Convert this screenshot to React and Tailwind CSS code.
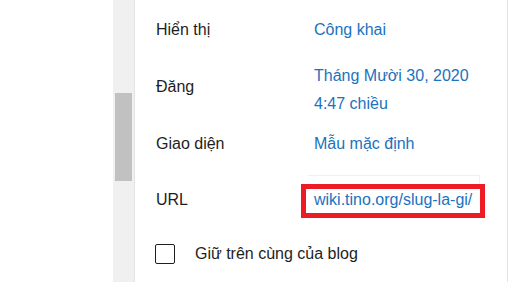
export default function App() {
  return (
    <div
      className="flex h-[282px] w-[511px] overflow-hidden bg-white text-[16px] text-[#1e1e1e]"
      style={{ fontFamily: '"Liberation Sans", Arial, sans-serif' }}
    >
      <div className="w-[113px] shrink-0" />

      {/* scrollbar */}
      <div className="flex w-[22px] shrink-0 flex-col border-r border-[#e4e4e4] bg-[#f0f0f0]">
        <div className="h-[93px]" />
        <div className="mx-[2px] h-[88px] bg-[#c1c1c1]" />
      </div>

      {/* settings panel */}
      <div className="w-[373px] shrink-0 border-r border-[#e2e4e7] pl-[21px] pt-[16px] leading-[28px]">
        <div className="flex">
          <div className="w-[158px]">Hiển thị</div>
          <div className="text-[#1b72bd]">Công khai</div>
        </div>

        <div className="mt-[18px] flex items-start">
          <div className="mt-[11px] w-[158px]">Đăng</div>
          <div className="text-[#1b72bd]">
            <div>Tháng Mười 30, 2020</div>
            <div>4:47 chiều</div>
          </div>
        </div>

        <div className="mt-[12px] flex">
          <div className="w-[158px]">Giao diện</div>
          <div className="text-[#1b72bd]">Mẫu mặc định</div>
        </div>

        <div className="mt-[26px] flex items-start">
          <div className="mt-[1.5px] w-[158px]">URL</div>
          <div className="relative -ml-[13px]">
            <div className="absolute -top-[9px] left-[7px] h-[20px] w-[172px] border-t border-r border-[#eef0f2]" />
            <div className="relative border-[5px] border-[#ed1c24] bg-white pb-[3px] pl-[8px] pr-[8px] leading-[21px] text-[#1b72bd]">
              wiki.tino.org/slug-la-gi/
            </div>
          </div>
        </div>

        <div className="mt-[22px] -ml-px flex items-center">
          <div className="h-[20px] w-[20px] rounded-[2px] border-[1.5px] border-[#1e1e1e]" />
          <div className="ml-[20px]">Giữ trên cùng của blog</div>
        </div>
      </div>
    </div>
  )
}
